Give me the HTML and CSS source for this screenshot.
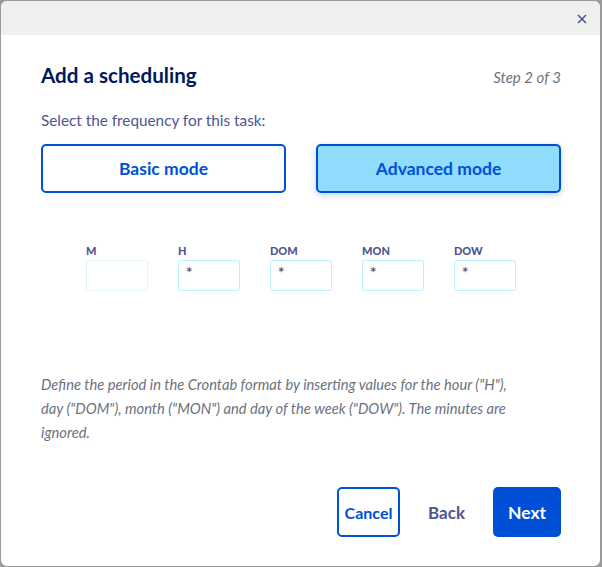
FILE: index.html
```html
<!DOCTYPE html>
<html lang="en">
<head>
<meta charset="utf-8">
<title>Add a scheduling</title>
<link rel="stylesheet" href="styles.css">
</head>
<body>
<div class="modal">
  <div class="modal-header">
    <button class="close" aria-label="Close">
      <svg width="10" height="10" viewBox="0 0 10 10"><path d="M1 1L9 9M9 1L1 9" stroke="#4d5592" stroke-width="1.6" fill="none"/></svg>
    </button>
  </div>
  <div class="modal-body">
    <div class="title-row">
      <h2 class="title">Add a scheduling</h2>
      <span class="step">Step 2 of 3</span>
    </div>
    <p class="subtitle">Select the frequency for this task:</p>
    <div class="modes">
      <button class="mode">Basic mode</button>
      <button class="mode active">Advanced mode</button>
    </div>
    <div class="cron">
      <div class="field">
        <label class="label">M</label>
        <input class="input disabled" type="text" value="" disabled>
      </div>
      <div class="field">
        <label class="label">H</label>
        <input class="input" type="text" value="*">
      </div>
      <div class="field">
        <label class="label">DOM</label>
        <input class="input" type="text" value="*">
      </div>
      <div class="field">
        <label class="label">MON</label>
        <input class="input" type="text" value="*">
      </div>
      <div class="field">
        <label class="label">DOW</label>
        <input class="input" type="text" value="*">
      </div>
    </div>
    <p class="help">Define the period in the Crontab format by inserting values for the hour ("H"), day ("DOM"), month ("MON") and day of the week ("DOW"). The minutes are ignored.</p>
  </div>
  <div class="modal-footer">
    <button class="btn btn-outline">Cancel</button>
    <button class="btn btn-link">Back</button>
    <button class="btn btn-primary">Next</button>
  </div>
</div>
</body>
</html>
```
FILE: styles.css
```css
* { box-sizing: border-box; }
html, body { margin: 0; padding: 0; }
body {
  background: #9a9a9a;
  padding: 1px;
  font-family: Lato, "Noto Sans", sans-serif;
  width: 602px;
  height: 567px;
  overflow: hidden;
}
.modal {
  width: 599px;
  height: 565px;
  background: #fff;
  border-radius: 6px;
  overflow: hidden;
  display: flex;
  flex-direction: column;
}
.modal-header {
  height: 34px;
  background: #eef0ed;
  display: flex;
  justify-content: flex-end;
  align-items: center;
  padding-right: 11px;
}
.close {
  border: 0;
  background: none;
  padding: 0;
  width: 14px;
  height: 14px;
  margin-top: 2px;
  display: flex;
  align-items: center;
  justify-content: center;
  cursor: pointer;
}
.modal-body {
  padding: 28px 39px 0 40px;
  flex: 1;
}
.title-row {
  display: flex;
  justify-content: space-between;
  align-items: baseline;
}
.title {
  margin: 0;
  font-size: 20.6px;
  line-height: 24px;
  font-weight: 700;
  color: #00185e;
}
.step {
  font-size: 15px;
  font-style: italic;
  color: #6b7280;
}
.subtitle {
  margin: 23px 0 0;
  font-size: 15.3px;
  line-height: 20px;
  color: #4d5592;
}
.modes {
  display: grid;
  grid-template-columns: 1fr 1fr;
  gap: 30px;
  margin-top: 14px;
}
.mode {
  height: 49px;
  border: 2px solid #0050d7;
  border-radius: 5px;
  background: #fff;
  color: #0050d7;
  font-family: inherit;
  font-size: 17.5px;
  font-weight: 700;
  cursor: pointer;
}
.mode.active {
  background: #8fdcfd;
  box-shadow: 0 2px 6px rgba(0, 80, 215, 0.25);
}
.cron {
  display: flex;
  justify-content: center;
  gap: 30px;
  margin-top: 52px;
}
.field {
  display: flex;
  flex-direction: column;
  width: 62px;
}
.label {
  font-size: 11px;
  line-height: 12px;
  font-weight: 900;
  color: #4d5592;
  margin-bottom: 3px;
}
.input {
  width: 62px;
  height: 31px;
  border: 1px solid #bef1ff;
  border-radius: 2px;
  padding: 0 7px 8px;
  font-family: inherit;
  font-size: 15px;
  font-weight: 700;
  color: #4d5592;
  background: #fff;
  outline: none;
}
.input.disabled {
  border-color: #e1f6fb;
}
.help {
  margin: 81px 0 0;
  max-width: 476px;
  font-size: 14.7px;
  line-height: 24px;
  font-style: italic;
  color: #6b7280;
}
.modal-footer {
  display: flex;
  justify-content: flex-end;
  align-items: center;
  gap: 28px;
  padding: 0 39px 29px 0;
}
.btn {
  height: 50px;
  font-family: inherit;
  font-weight: 700;
  border-radius: 5px;
  cursor: pointer;
}
.btn-outline {
  width: 63px;
  border: 2px solid #0050d7;
  background: #fff;
  color: #0050d7;
  font-size: 16px;
  padding: 0;
}
.btn-link {
  border: 0;
  background: none;
  color: #4d5592;
  font-size: 17px;
  padding: 0;
}
.btn-primary {
  width: 68px;
  border: 0;
  background: #0050d7;
  color: #fff;
  font-size: 17.5px;
}
```
